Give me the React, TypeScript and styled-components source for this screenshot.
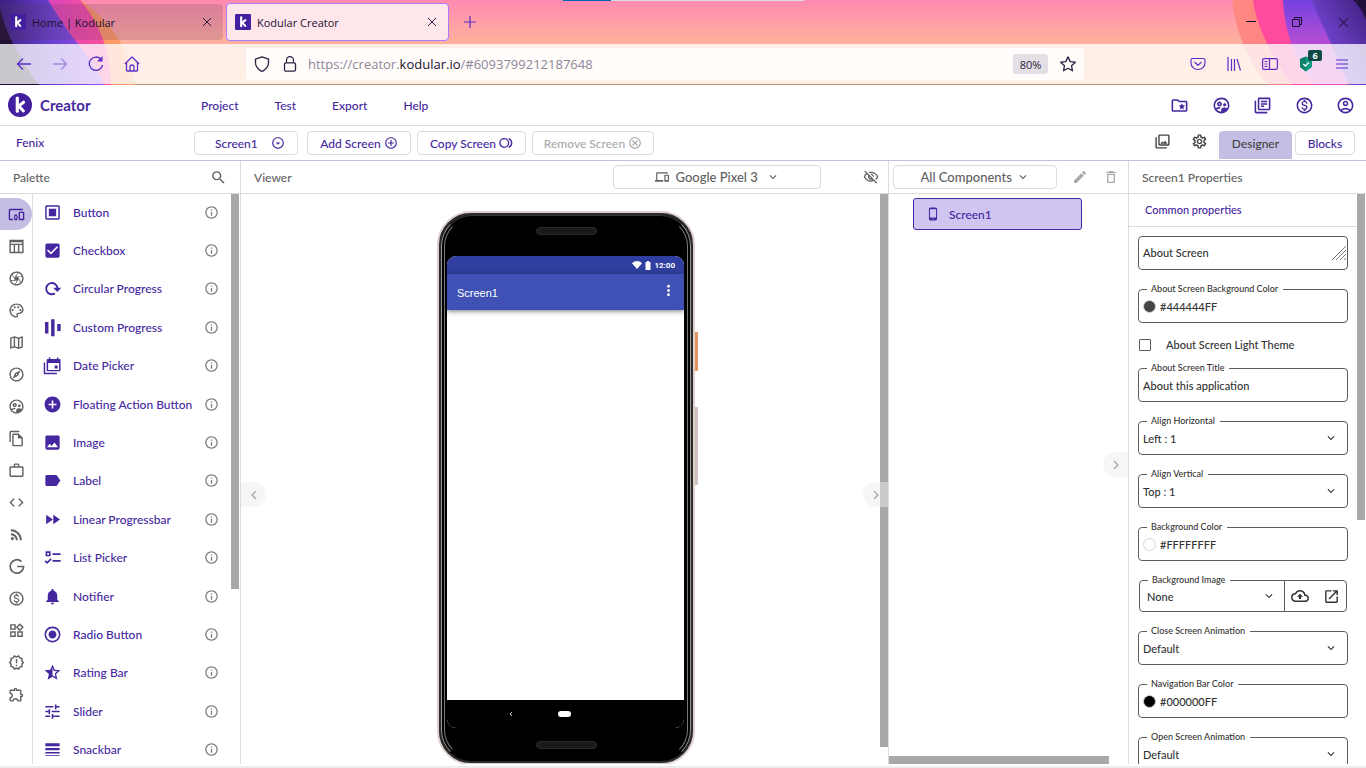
import React from 'react';
import styled, { createGlobalStyle } from 'styled-components';
import type { IconType } from 'react-icons';
import {
  MdAddCircle,
  MdCheckBox,
  MdCode,
  MdDeleteOutline,
  MdEdit,
  MdFastForward,
  MdImage,
  MdInfoOutline,
  MdKeyboardArrowDown,
  MdChevronLeft,
  MdChevronRight,
  MdLabel,
  MdLineWeight,
  MdMoreVert,
  MdNotifications,
  MdOpenInNew,
  MdOutlineAccountCircle,
  MdOutlineAddCircleOutline,
  MdOutlineArrowDropDownCircle,
  MdOutlineBackup,
  MdOutlineCamera,
  MdOutlineCancel,
  MdOutlineDevices,
  MdOutlineDevicesOther,
  MdOutlineExplore,
  MdOutlineExtension,
  MdOutlineFileCopy,
  MdOutlineFolderSpecial,
  MdOutlineLibraryBooks,
  MdOutlineMap,
  MdOutlineMonetizationOn,
  MdOutlineNewReleases,
  MdOutlinePalette,
  MdOutlinePhotoLibrary,
  MdOutlineSettings,
  MdOutlineSupervisedUserCircle,
  MdOutlineVisibilityOff,
  MdOutlineWidgets,
  MdPhoneAndroid,
  MdRadioButtonChecked,
  MdRssFeed,
  MdSearch,
  MdStarHalf,
  MdTune,
  MdWorkOutline,
} from 'react-icons/md';

const purple = '#4527a0';
const lilac = '#c5bee4';
const line = '#dcdcdc';
const grey = '#616161';
const ink = '#333333';
const appFont = "Lato, 'Open Sans', sans-serif";
const chromeFont = "'Open Sans', 'Noto Sans', sans-serif";

const GlobalStyle = createGlobalStyle`
  * { box-sizing: border-box; }
  body { margin: 0; background: #fff; font-family: ${appFont}; font-weight: 500; }
  button, input, select, textarea { font: inherit; color: inherit; }
  button { border: 0; background: none; padding: 0; cursor: pointer; }
  h1, h2, ul { margin: 0; padding: 0; font: inherit; }
  ul { list-style: none; }
  svg { display: block; flex: none; }
`;

const Window = styled.div`
  display: flex;
  flex-direction: column;
  height: 100vh;
  overflow: hidden;
`;

/* ---------- Browser chrome ---------- */

const Chrome = styled.div`
  position: relative;
  background: linear-gradient(#ff8ab1 0, #ffb29c 44px, #ffbd92 84px);
  border-bottom: 1px solid #b98d7e;
  font-family: ${chromeFont};
  font-weight: 400;
`;

const Swirl = styled.svg<{ $side: 'left' | 'right' }>`
  position: absolute;
  top: 0;
  ${(p) => p.$side}: 0;
  width: 150px;
  height: 85px;
`;

const TopMarker = styled.div`
  position: absolute;
  top: 0;
  left: 563px;
  width: 241px;
  height: 1px;
  background: linear-gradient(90deg, #0063b1 48px, #dcdcdc 48px);
`;

const TabStrip = styled.div`
  position: relative;
  display: flex;
  align-items: center;
  height: 44px;
  gap: 3px;
`;

const Tab = styled.div<{ $active?: boolean }>`
  display: flex;
  align-items: center;
  gap: 6px;
  width: 223px;
  height: ${(p) => (p.$active ? 38 : 36)}px;
  padding: 0 11px 0 ${(p) => (p.$active ? 8 : 10)}px;
  border: ${(p) => (p.$active ? '1px solid #a77bff' : '0')};
  border-radius: 4px;
  background: ${(p) => (p.$active ? '#fee6eb' : 'rgba(90, 60, 90, .2)')};
  color: #1c1030;
  font-size: 11px;
`;

const TabTitle = styled.button`
  flex: 1;
  text-align: left;
`;

const TabAdd = styled.button`
  margin-left: 12px;
`;

const WindowControls = styled.div`
  display: flex;
  margin-left: auto;
`;

const WindowButton = styled.button`
  display: grid;
  place-items: center;
  width: 46px;
  height: 44px;
`;

const NavBar = styled.div`
  position: relative;
  display: flex;
  align-items: center;
  height: 40px;
  padding: 0 6px;
  background: rgba(255, 255, 255, .77);
`;

const NavButton = styled.button<{ $faded?: boolean }>`
  position: relative;
  display: grid;
  place-items: center;
  width: 36px;
  height: 32px;
  color: #5b2fc9;
  opacity: ${(p) => (p.$faded ? 0.45 : 1)};
`;

const CountBadge = styled.span`
  position: absolute;
  top: 2px;
  right: 2px;
  width: 14px;
  height: 11px;
  border-radius: 2px;
  background: #0e4a43;
  color: #fff;
  font-size: 9px;
  font-weight: 700;
  line-height: 11px;
  text-align: center;
`;

const UrlBar = styled.div`
  display: flex;
  align-items: center;
  flex: 1;
  height: 32px;
  margin: 0 96px;
  padding: 0 7px;
  border-radius: 4px;
  background: rgba(255, 255, 255, .8);
  color: #2b2140;
`;

const UrlText = styled.div`
  flex: 1;
  margin-left: 9px;
  color: #8c8798;
  font-size: 13px;
  b { color: #1c1030; font-weight: 400; }
`;

const ZoomBadge = styled.button`
  width: 35px;
  height: 20px;
  margin-right: 11px;
  border-radius: 3px;
  background: #e3dfe4;
  font-size: 11px;
`;

const UrlIcon = styled.button`
  display: grid;
  place-items: center;
  width: 18px;
  & + & { margin-left: 10px; }
`;

/* ---------- App header ---------- */

const AppHeader = styled.header`
  display: flex;
  align-items: center;
  height: 41px;
  padding: 0 11px 0 8px;
  border-bottom: 1px solid ${line};
  color: ${purple};
`;

const Brand = styled.h1`
  display: flex;
  align-items: center;
  gap: 8px;
  width: 193px;
  font-size: 15px;
  font-weight: 700;
`;

const Menu = styled.nav`
  display: flex;
  gap: 36px;
  font-size: 12px;
`;

const HeaderIcons = styled.div`
  display: flex;
  justify-content: space-between;
  width: 185px;
  margin-left: auto;
`;

const Toolbar = styled.div`
  display: flex;
  align-items: flex-start;
  gap: 6px;
  height: 35px;
  padding: 5px 11px 0 16px;
  border-bottom: 1px solid ${lilac};
  color: ${purple};
  font-size: 12px;
`;

const ProjectName = styled.div`
  width: 172px;
  line-height: 24px;
`;

const ToolButton = styled.button<{ $width: number; $muted?: boolean }>`
  display: flex;
  align-items: center;
  justify-content: center;
  gap: 3px;
  width: ${(p) => p.$width}px;
  height: 24px;
  border: 1px solid ${line};
  border-radius: 4px;
  color: ${(p) => (p.$muted ? '#a9a9a9' : purple)};
`;

const PickerBox = styled.div<{ $width: number; $gap: number }>`
  display: flex;
  align-items: center;
  justify-content: center;
  gap: ${(p) => p.$gap}px;
  width: ${(p) => p.$width}px;
  height: 24px;
  border: 1px solid ${line};
  border-radius: 4px;
`;

const ScreenPicker = styled(PickerBox)`
  padding-left: 8px;
  margin-right: 3px;
`;

const PlainSelect = styled.select`
  appearance: none;
  border: 0;
  background: none;
  padding: 0;
  outline: 0;
`;

const ToolIcons = styled.div`
  display: flex;
  gap: 20px;
  margin: 2px 5px 0 auto;
  color: #424242;
`;

const ViewTab = styled.button`
  width: 73px;
  height: 28px;
  margin-right: -3px;
  padding-bottom: 4px;
  border-radius: 4px 4px 0 0;
  background: ${lilac};
  color: #424242;
`;

/* ---------- Workspace ---------- */

const Workspace = styled.main`
  display: flex;
  flex: 1;
  min-height: 0;
  margin-bottom: 2px;
`;

const BottomEdge = styled.div`
  height: 2px;
  background: #ececec;
`;

const Panel = styled.section<{ $width?: number }>`
  position: relative;
  display: flex;
  flex-direction: column;
  flex: ${(p) => (p.$width ? `0 0 ${p.$width}px` : '1')};
  min-width: 0;
  & + & { border-left: 1px solid ${line}; }
`;

const PanelHead = styled.div`
  display: flex;
  align-items: center;
  flex: none;
  height: 33px;
  padding: 0 9px 0 13px;
  border-bottom: 1px solid ${line};
  color: ${grey};
  font-size: 12px;
`;

const HeadIcon = styled.button<{ $pale?: boolean }>`
  margin-left: auto;
  color: ${(p) => (p.$pale ? '#a9a9a9' : grey)};
`;

const PaletteHead = styled(PanelHead)`
  padding-right: 13px;
`;

const PanelBody = styled.div`
  display: flex;
  flex: 1;
  min-height: 0;
  overflow: hidden;
`;

const ScrollTrack = styled.div<{ $width: number }>`
  flex: 0 0 ${(p) => p.$width}px;
`;

const ScrollThumb = styled.div<{ $height: number }>`
  width: 8px;
  height: ${(p) => p.$height}px;
  background: #a8a8a8;
`;

const Rail = styled.nav`
  flex: 0 0 33px;
  padding-top: 4px;
  border-right: 1px solid ${line};
`;

const RailButton = styled.button<{ $active?: boolean }>`
  display: grid;
  place-items: center;
  width: 32px;
  height: 32px;
  border-radius: 0 16px 16px 0;
  background: ${(p) => (p.$active ? lilac : 'none')};
  color: ${(p) => (p.$active ? purple : grey)};
`;

const PaletteList = styled.ul`
  display: grid;
  grid-template-rows: repeat(15, 1fr);
  flex: 1;
  height: 576px;
`;

const PaletteItem = styled.li`
  display: flex;
  align-items: center;
  padding: 0 12px 2px 10px;
  color: ${purple};
  font-size: 12px;
  svg:last-child { color: #7b7b7b; }
`;

const PaletteName = styled.button`
  flex: 1;
  margin-left: 11px;
  text-align: left;
  white-space: nowrap;
`;

const Collapse = styled.button<{ $side: 'left' | 'right'; $top: number }>`
  position: absolute;
  top: ${(p) => p.$top}px;
  ${(p) => p.$side}: 0;
  display: grid;
  place-items: center;
  width: 25px;
  height: 25px;
  border-radius: ${(p) => (p.$side === 'left' ? '0 13px 13px 0' : '13px 0 0 13px')};
  background: rgba(238, 238, 238, .5);
  color: #b0b0b0;
`;

const DevicePicker = styled(PickerBox)`
  margin-left: auto;
  margin-right: 42px;
  font-size: 13px;
`;

const FilterPicker = styled(PickerBox)`
  font-size: 13px;
`;

/* ---------- Phone ---------- */

const Stage = styled.div`
  display: flex;
  flex: 1;
  justify-content: center;
  padding: 17px 0 0 11px;
`;

const Phone = styled.div`
  position: relative;
  display: flex;
  flex-direction: column;
  width: 258px;
  height: 554px;
  padding: 43px 9px 35px 8px;
  border: 2px solid #ddd0cd;
  border-radius: 34px;
  background: #000;
  box-shadow: inset 0 0 0 2px #2b2b2b;
  &::before, &::after {
    content: '';
    position: absolute;
    border: 1px solid transparent;
    pointer-events: none;
  }
  &::before {
    inset: 2px;
    border-left-color: #999;
    border-right-color: #999;
    border-top-color: #333;
    border-radius: 31px;
  }
  &::after {
    inset: 5px;
    border-left-color: #777;
    border-right-color: #777;
    border-radius: 28px;
  }
`;

const Speaker = styled.div<{ $edge: 'top' | 'bottom' }>`
  position: absolute;
  ${(p) => p.$edge}: 14px;
  left: 97px;
  width: 61px;
  height: 8px;
  border: 1px solid #2a2a2a;
  border-radius: 4px;
  background: #1a1a1a;
`;

const SideKey = styled.div<{ $top: number; $height: number; $color: string }>`
  position: absolute;
  top: ${(p) => p.$top}px;
  right: -5px;
  width: 3px;
  height: ${(p) => p.$height}px;
  border-radius: 0 1px 1px 0;
  background: ${(p) => p.$color};
`;

const PhoneScreen = styled.div`
  display: flex;
  flex-direction: column;
  flex: 1;
  overflow: hidden;
  border-radius: 9px;
  background: #fff;
`;

const StatusBar = styled.div`
  display: flex;
  align-items: center;
  justify-content: flex-end;
  gap: 3px;
  height: 18px;
  padding: 0 9px;
  background: #303f9f;
  color: #fff;
  font: 700 8px Roboto, sans-serif;
`;

const TitleBar = styled.div`
  display: flex;
  align-items: center;
  justify-content: space-between;
  height: 36px;
  padding: 2px 7px 0 10px;
  background: #3f51b5;
  box-shadow: 0 1px 5px rgba(0, 0, 0, .55);
  color: #fff;
  font: 11px 'Liberation Sans', sans-serif;
  svg { align-self: flex-start; margin-top: 6px; }
`;

const SoftKeys = styled.div`
  display: flex;
  align-items: center;
  gap: 43px;
  height: 28px;
  margin-top: auto;
  padding-left: 60px;
  background: #000;
  color: #fff;
`;

const HomePill = styled.span`
  width: 13px;
  height: 6px;
  border-radius: 3px;
  background: #fff;
`;

/* ---------- Components ---------- */

const ComponentHead = styled(PanelHead)`
  padding: 0 9px 0 4px;
`;

const Tree = styled.div`
  display: flex;
  flex-direction: column;
  flex: 1;
  padding: 4px 46px 0 24px;
`;

const TreeNode = styled.button`
  display: flex;
  align-items: center;
  gap: 9px;
  height: 32px;
  padding-left: 12px;
  border: 1px solid ${purple};
  border-radius: 3px;
  background: #d0c4f0;
  color: ${purple};
  font-size: 12px;
`;

const HorizontalThumb = styled.div`
  width: 220px;
  height: 8px;
  background: #a8a8a8;
`;

/* ---------- Properties ---------- */

const Properties = styled.div`
  flex: 1;
  min-width: 0;
  color: ${ink};
  font-size: 11px;
`;

const GroupTitle = styled.h2`
  height: 33px;
  padding-left: 16px;
  border-bottom: 1px solid ${line};
  color: ${purple};
  font-size: 11px;
  line-height: 32px;
`;

const Form = styled.form`
  padding: 9px 9px 0;
`;

const FieldBox = styled.div<{ $split?: boolean }>`
  position: relative;
  display: flex;
  align-items: center;
  height: ${(p) => (p.$split ? 32 : 34)}px;
  margin: ${(p) => (p.$split ? '0 1px 19px' : '0 0 19px')};
  padding-left: ${(p) => (p.$split ? 7 : 4)}px;
  border: 1px solid #5c5c5c;
  border-radius: 4px;
`;

const FieldLabel = styled.label`
  position: absolute;
  top: -8px;
  left: 8px;
  padding: 0 5px 0 4px;
  background: #fff;
  font-size: 9px;
  line-height: 14px;
`;

const FieldInput = styled.input`
  flex: 1;
  min-width: 0;
  padding: 0;
  border: 0;
  outline: 0;
  background: none;
`;

const FieldArea = styled.textarea`
  flex: 1;
  min-width: 0;
  height: 16px;
  padding: 0;
  border: 0;
  outline: 0;
  background: none;
  line-height: 16px;
  resize: none;
  overflow: hidden;
`;

const FieldSelect = styled(PlainSelect)`
  flex: 1;
  min-width: 0;
  margin-right: -16px;
`;

const Chevron = styled(MdKeyboardArrowDown)<{ $inset: number }>`
  margin-right: ${(p) => p.$inset}px;
  pointer-events: none;
`;

const Swatch = styled.span<{ $color: string }>`
  width: 13px;
  height: 13px;
  margin-right: 4px;
  border: 1px solid #d6d6d6;
  border-radius: 50%;
  background: ${(p) => p.$color};
`;

const CheckRow = styled.label`
  display: flex;
  align-items: center;
  gap: 15px;
  height: 45px;
  margin-top: -19px;
  padding: 0 0 2px 1px;
`;

const CheckInput = styled.input`
  appearance: none;
  width: 12px;
  height: 12px;
  margin: 0;
  border: 1px solid #5c5c5c;
  border-radius: 1px;
`;

const SplitActions = styled.div`
  display: flex;
  align-items: center;
  gap: 14px;
  height: 32px;
  padding: 0 6px;
  border-left: 1px solid #5c5c5c;
`;

/* ---------- Drawn icons ---------- */

const Mark = ({ size, round }: { size: number; round?: boolean }) => (
  <svg width={size} height={size} viewBox="0 0 24 24" fill="none" aria-hidden="true">
    <rect width="24" height="24" rx={round ? 12 : 2} fill="#4320a0" />
    <path d="M9.3 5v13.2" stroke="#fff" strokeWidth="3.2" strokeLinecap="round" />
    <path d="M15.6 9.2l-4.8 3.7 4.6 5" stroke="#fff" strokeWidth="3" strokeLinecap="round" strokeLinejoin="round" />
  </svg>
);

const Cross = ({ size = 10 }: { size?: number }) => (
  <svg width={size} height={size} viewBox="0 0 10 10" stroke="#2b1a45" fill="none">
    <path d="M1 1l8 8M9 1l-8 8" />
  </svg>
);

type DrawnProps = { size?: number };

const ButtonIcon = ({ size = 18 }: DrawnProps) => (
  <svg width={size} height={size} viewBox="-1 -1 26 26" fill="currentColor">
    <path d="M4 2h16a2 2 0 0 1 2 2v16a2 2 0 0 1-2 2H4a2 2 0 0 1-2-2V4c0-1.100.9-2 2-2zm0 2v16h16V4zM7 7h10v10H7z" fillRule="evenodd" />
  </svg>
);

const CircularIcon = ({ size = 18 }: DrawnProps) => (
  <svg width={size} height={size} viewBox="-2 -2 28 28" fill="none" stroke="currentColor" strokeWidth="2.8">
    <path d="M15.500 19.200A8.300 8.300 0 1 1 19.300 12" />
    <path d="M13 11h12l-6 6z" fill="currentColor" stroke="none" />
  </svg>
);

const BarsIcon = ({ size = 18 }: DrawnProps) => (
  <svg width={size} height={size} viewBox="-2 -2 28 28" fill="currentColor">
    <path d="M1 4h5v17H1zM10 0h5v25h-5zM19 7h5v10h-5z" />
  </svg>
);

const DateIcon = ({ size = 18 }: DrawnProps) => (
  <svg width={size} height={size} viewBox="-1 -1 26 26" fill="currentColor">
    <path d="M7 1h2v2h9V1h2v2h1.500A1.500 1.500 0 0 1 23 4.500v14a1.500 1.500 0 0 1-1.500 1.500h-16A1.500 1.500 0 0 1 4 18.500v-14A1.500 1.500 0 0 1 5.500 3H7zM6 8.500V18h15V8.500zM15 12h4v4h-4z" fillRule="evenodd" />
    <path d="M0 8h2v14h16v2H1.500A1.500 1.500 0 0 1 0 22.500z" />
  </svg>
);

const ListIcon = ({ size = 18 }: DrawnProps) => (
  <svg width={size} height={size} viewBox="-2 -2 28 28" fill="none" stroke="currentColor" strokeWidth="2.4">
    <path d="M3 4h5v5H3zM12 7h12M12 17h12M1 17l3 3 6-6" />
  </svg>
);

const GIcon = ({ size = 16 }: DrawnProps) => (
  <svg width={size} height={size} viewBox="0 0 24 24" fill="none" stroke="currentColor" strokeWidth="2.400">
    <path d="M19 5a9.500 9.500 0 1 0 3 7h-9" />
  </svg>
);

const TableIcon = ({ size = 16 }: DrawnProps) => (
  <svg width={size} height={size} viewBox="0 0 24 24" fill="none" stroke="currentColor" strokeWidth="2">
    <path d="M3 3.500h18v17H3zM3 9h18M9 9v11.500M15 9v11.500M3 5h18" />
  </svg>
);

const CopyRings = () => (
  <svg width="14" height="14" viewBox="0 0 24 24" fill="none" stroke="currentColor" strokeWidth="2.400">
    <circle cx="9" cy="12" r="7.500" />
    <path d="M16.500 4.500a8 8 0 0 1 0 15" />
  </svg>
);

const paletteItems: [string, IconType | React.FC<DrawnProps>][] = [
  ['Button', ButtonIcon],
  ['Checkbox', MdCheckBox],
  ['Circular Progress', CircularIcon],
  ['Custom Progress', BarsIcon],
  ['Date Picker', DateIcon],
  ['Floating Action Button', MdAddCircle],
  ['Image', MdImage],
  ['Label', MdLabel],
  ['Linear Progressbar', MdFastForward],
  ['List Picker', ListIcon],
  ['Notifier', MdNotifications],
  ['Radio Button', MdRadioButtonChecked],
  ['Rating Bar', MdStarHalf],
  ['Slider', MdTune],
  ['Snackbar', MdLineWeight],
];

const railItems: [string, IconType | React.FC<DrawnProps>][] = [
  ['User Interface', MdOutlineDevicesOther],
  ['Layout', TableIcon],
  ['Media', MdOutlineCamera],
  ['Drawing and Animation', MdOutlinePalette],
  ['Maps', MdOutlineMap],
  ['Sensors', MdOutlineExplore],
  ['Social', MdOutlineSupervisedUserCircle],
  ['Storage', MdOutlineFileCopy],
  ['Utilities', MdWorkOutline],
  ['Dynamic Components', MdCode],
  ['Connectivity', MdRssFeed],
  ['Google', GIcon],
  ['Monetization', MdOutlineMonetizationOn],
  ['Widgets', MdOutlineWidgets],
  ['Experimental', MdOutlineNewReleases],
  ['Extension', MdOutlineExtension],
];

const headerIcons: [string, IconType][] = [
  ['Projects', MdOutlineFolderSpecial],
  ['Community', MdOutlineSupervisedUserCircle],
  ['Docs', MdOutlineLibraryBooks],
  ['Earnings', MdOutlineMonetizationOn],
  ['Account', MdOutlineAccountCircle],
];

const SelectField = ({ id, label, value }: { id: string; label: string; value: string }) => (
  <FieldBox>
    <FieldLabel htmlFor={id}>{label}</FieldLabel>
    <FieldSelect id={id}>
      <option>{value}</option>
    </FieldSelect>
    <Chevron size={14} $inset={9} />
  </FieldBox>
);

const TextField = ({ id, label, value, swatch }: { id: string; label: string; value: string; swatch?: string }) => (
  <FieldBox>
    <FieldLabel htmlFor={id}>{label}</FieldLabel>
    {swatch && <Swatch $color={swatch} />}
    <FieldInput id={id} defaultValue={value} />
  </FieldBox>
);

const BrowserChrome = () => (
  <Chrome>
    <Swirl $side="left" viewBox="0 0 150 85" aria-hidden="true">
      <defs>
        <linearGradient id="violet" x1="0" x2="1">
          <stop offset="0" stopColor="#3a1f80" />
          <stop offset=".5" stopColor="#6a3fd0" />
          <stop offset="1" stopColor="#9a50f0" />
        </linearGradient>
        <linearGradient id="rose" x1="0" x2="1">
          <stop offset="0" stopColor="#c43fd0" />
          <stop offset="1" stopColor="#ff4f9c" />
        </linearGradient>
        <linearGradient id="peach" x1="0" x2="1">
          <stop offset="0" stopColor="#ff7a80" />
          <stop offset="1" stopColor="#ffa060" />
        </linearGradient>
      </defs>
      <path d="M0 0h80c30 20 50 50 55 85H0z" fill="url(#peach)" />
      <path d="M0 0h80c20 24 30 50 31 85H0z" fill="url(#rose)" />
      <path d="M0 0h48c10 16 20 32 30 44s20 26 26 41H0z" fill="url(#violet)" />
      <path d="M0 8c4 20 18 50 39 77H0z" fill="#1e0f33" />
    </Swirl>
    <Swirl $side="right" viewBox="0 0 150 85" aria-hidden="true">
      <defs>
        <linearGradient id="coral" x1="0" x2="1">
          <stop offset="0" stopColor="#ff8a80" />
          <stop offset="1" stopColor="#ff6f90" />
        </linearGradient>
        <linearGradient id="violetDown" x1="0" y1="0" x2="0" y2="1">
          <stop offset="0" stopColor="#7442e0" />
          <stop offset=".6" stopColor="#c04fd0" />
          <stop offset="1" stopColor="#e050c0" />
        </linearGradient>
        <linearGradient id="indigo" x1="0" y1="1" x2="1" y2="0">
          <stop offset="0" stopColor="#9058ff" />
          <stop offset="1" stopColor="#40207f" />
        </linearGradient>
      </defs>
      <path d="M16 0c3 30 16 62 36 85h98V0z" fill="url(#coral)" />
      <path d="M37 0c3 25 20 60 40 85h73V0z" fill="#ff4a9e" />
      <path d="M67 0c1 30 12 60 30 85h53V0z" fill="url(#violetDown)" />
      <path d="M96 0c8 24 24 50 36 85h18V0z" fill="url(#indigo)" />
      <path d="M137 0c6 5 10 12 13 20V0z" fill="#22103c" />
    </Swirl>
    <TopMarker />
    <TabStrip>
      <Tab>
        <Mark size={16} />
        <TabTitle>Home | Kodular</TabTitle>
        <button aria-label="Close tab"><Cross /></button>
      </Tab>
      <Tab $active>
        <Mark size={16} />
        <TabTitle>Kodular Creator</TabTitle>
        <button aria-label="Close tab"><Cross /></button>
      </Tab>
      <TabAdd aria-label="New tab">
        <svg width="12" height="12" viewBox="0 0 12 12" stroke="#5b2fc9" strokeWidth="1.200">
          <path d="M6 0v12M0 6h12" />
        </svg>
      </TabAdd>
      <WindowControls>
        <WindowButton aria-label="Minimize">
          <svg width="10" height="10" stroke="#1c1030"><path d="M0 4.500h10" /></svg>
        </WindowButton>
        <WindowButton aria-label="Restore">
          <svg width="11" height="11" stroke="#1c1030" fill="none">
            <path d="M.5 2.500h7v7h-7zM2.500 2.500v-2h7v7h-2" />
          </svg>
        </WindowButton>
        <WindowButton aria-label="Close window"><Cross size={11} /></WindowButton>
      </WindowControls>
    </TabStrip>
    <NavBar>
      <NavButton aria-label="Back">
        <svg width="16" height="16" fill="none" stroke="currentColor" strokeWidth="1.300">
          <path d="M15 8H1.500M7 2.500L1.500 8 7 13.500" />
        </svg>
      </NavButton>
      <NavButton aria-label="Forward" $faded>
        <svg width="16" height="16" fill="none" stroke="currentColor" strokeWidth="1.300">
          <path d="M1 8h13.500M9 2.500L14.500 8 9 13.500" />
        </svg>
      </NavButton>
      <NavButton aria-label="Reload">
        <svg width="16" height="16" fill="none" stroke="currentColor" strokeWidth="1.300">
          <path d="M12.800 3A6.700 6.700 0 1 0 14.600 9" />
          <path d="M14.500 0v5.500H9z" fill="currentColor" stroke="none" />
        </svg>
      </NavButton>
      <NavButton aria-label="Home">
        <svg width="16" height="16" fill="none" stroke="currentColor" strokeWidth="1.300" strokeLinejoin="round">
          <path d="M.8 8L8 1l7.200 7M2.500 6.800V14a1 1 0 0 0 1 1h9a1 1 0 0 0 1-1V6.800M6 15v-4a2 2 0 0 1 4 0v4" />
        </svg>
      </NavButton>
      <UrlBar>
        <UrlIcon aria-label="Tracking protection">
          <svg width="16" height="16" fill="none" stroke="currentColor" strokeWidth="1.300" strokeLinejoin="round">
            <path d="M8 .8l6.500 2.400v3.600c0 3.800-2.700 6.400-5.300 8.100-.8.500-1.600.5-2.400 0C4.200 13.200 1.500 10.600 1.500 6.800V3.200z" />
          </svg>
        </UrlIcon>
        <UrlIcon aria-label="Connection secure">
          <svg width="16" height="16" fill="none" stroke="currentColor" strokeWidth="1.300">
            <rect x="2.500" y="6.800" width="11" height="8.400" rx="1.500" />
            <path d="M4.500 6.500V4.200a3.500 3.500 0 0 1 7 0v2.300" />
          </svg>
        </UrlIcon>
        <UrlText role="textbox" aria-label="Address">
          https://creator.<b>kodular.io</b>/#6093799212187648
        </UrlText>
        <ZoomBadge>80%</ZoomBadge>
        <UrlIcon aria-label="Bookmark">
          <svg width="16" height="16" viewBox="0 0 16 16" fill="none" stroke="currentColor" strokeWidth="1.300" strokeLinejoin="round">
            <path d="M8 .9l2.200 4.700 5.100.6-3.800 3.500 1 5.100L8 12.300l-4.500 2.500 1-5.100L.7 6.200l5.100-.6z" />
          </svg>
        </UrlIcon>
      </UrlBar>
      <NavButton aria-label="Pocket">
        <svg width="16" height="16" fill="none" stroke="currentColor" strokeWidth="1.200" strokeLinejoin="round">
          <path d="M2.500 2.500h11a1.500 1.500 0 0 1 1.500 1.500v3a7 6.500 0 0 1-14 0V4a1.500 1.500 0 0 1 1.500-1.500zM4.500 6L8 9.300 11.500 6" />
        </svg>
      </NavButton>
      <NavButton aria-label="Library">
        <svg width="16" height="16" fill="none" stroke="currentColor" strokeWidth="1.200">
          <path d="M2 1v14M5.500 3v12M8.500 3v12M11 3l3.500 11.500" />
        </svg>
      </NavButton>
      <NavButton aria-label="Sidebar">
        <svg width="16" height="14" fill="none" stroke="currentColor" strokeWidth="1.200">
          <rect x=".6" y="1.600" width="14.800" height="10.800" rx="1.500" />
          <path d="M7.500 1.500v11M2.500 4.500h3M2.500 7h3M2.500 9.500h3" />
        </svg>
      </NavButton>
      <NavButton aria-label="Shield extension">
        <svg width="16" height="16" fill="none">
          <path d="M8 .5l6 2.500v8l-6 4.500L2 11V3z" fill="#129a80" />
          <path d="M8 .5L2 3v8l6 4.500z" fill="#0c8069" />
          <path d="M5.300 8l2 2 3.500-3.500" stroke="#fff" strokeWidth="1.300" />
        </svg>
        <CountBadge>6</CountBadge>
      </NavButton>
      <NavButton aria-label="Menu">
        <svg width="12" height="10" stroke="currentColor" strokeWidth="1.200">
          <path d="M0 1h12M0 5h12M0 9h12" />
        </svg>
      </NavButton>
    </NavBar>
  </Chrome>
);

const PhonePreview = () => (
  <Phone>
    <Speaker $edge="top" />
    <PhoneScreen>
      <StatusBar>
        <svg width="10" height="8" viewBox="0 0 10 8" fill="#fff"><path d="M0 2.200C3 -.6 7 -.6 10 2.200L5 8z" /></svg>
        <svg width="6" height="9" viewBox="0 0 6 9" fill="#fff"><path d="M.5 1h1.500V0h2v1h1.500v8h-5z" /></svg>
        <span>12:00</span>
      </StatusBar>
      <TitleBar>
        <span>Screen1</span>
        <MdMoreVert size={17} />
      </TitleBar>
      <SoftKeys>
        <MdChevronLeft size={8} />
        <HomePill />
      </SoftKeys>
    </PhoneScreen>
    <Speaker $edge="bottom" />
    <SideKey $top={119} $height={39} $color="#e8935f" />
    <SideKey $top={194} $height={78} $color="#cfc2c0" />
  </Phone>
);

export default function App() {
  return (
    <Window>
      <GlobalStyle />
      <BrowserChrome />

      <AppHeader>
        <Brand>
          <Mark size={24} round />
          Creator
        </Brand>
        <Menu>
          {['Project', 'Test', 'Export', 'Help'].map((name) => (
            <button key={name}>{name}</button>
          ))}
        </Menu>
        <HeaderIcons>
          {headerIcons.map(([name, Icon]) => (
            <button key={name} aria-label={name}><Icon size={19} /></button>
          ))}
        </HeaderIcons>
      </AppHeader>

      <Toolbar>
        <ProjectName>Fenix</ProjectName>
        <ScreenPicker $width={104} $gap={13}>
          <PlainSelect aria-label="Screen"><option>Screen1</option></PlainSelect>
          <MdOutlineArrowDropDownCircle size={14} />
        </ScreenPicker>
        <ToolButton $width={104}>Add Screen<MdOutlineAddCircleOutline size={14} /></ToolButton>
        <ToolButton $width={109}>Copy Screen<CopyRings /></ToolButton>
        <ToolButton $width={122} $muted>Remove Screen<MdOutlineCancel size={14} /></ToolButton>
        <ToolIcons>
          <button aria-label="Assets"><MdOutlinePhotoLibrary size={17} /></button>
          <button aria-label="Project settings"><MdOutlineSettings size={17} /></button>
        </ToolIcons>
        <ViewTab>Designer</ViewTab>
        <ToolButton $width={60}>Blocks</ToolButton>
      </Toolbar>

      <Workspace>
        <Panel $width={240}>
          <PaletteHead>
            Palette
            <HeadIcon aria-label="Search palette"><MdSearch size={17} /></HeadIcon>
          </PaletteHead>
          <PanelBody>
            <Rail>
              {railItems.map(([name, Icon], index) => (
                <RailButton key={name} aria-label={name} $active={index === 0}>
                  <Icon size={17} />
                </RailButton>
              ))}
            </Rail>
            <PaletteList>
              {paletteItems.map(([name, Icon]) => (
                <PaletteItem key={name}>
                  <Icon size={19} />
                  <PaletteName>{name}</PaletteName>
                  <MdInfoOutline size={15} />
                </PaletteItem>
              ))}
            </PaletteList>
            <ScrollTrack $width={9}><ScrollThumb $height={395} /></ScrollTrack>
          </PanelBody>
        </Panel>

        <Panel>
          <PanelHead>
            Viewer
            <DevicePicker $width={208} $gap={7}>
              <MdOutlineDevices size={14} />
              <PlainSelect aria-label="Device"><option>Google Pixel 3</option></PlainSelect>
              <Chevron size={14} $inset={0} />
            </DevicePicker>
            <button aria-label="Hidden components"><MdOutlineVisibilityOff size={16} /></button>
          </PanelHead>
          <PanelBody>
            <Stage><PhonePreview /></Stage>
            <ScrollTrack $width={8}><ScrollThumb $height={553} /></ScrollTrack>
          </PanelBody>
          <Collapse $side="left" $top={321} aria-label="Collapse palette"><MdChevronLeft size={18} /></Collapse>
          <Collapse $side="right" $top={321} aria-label="Collapse components"><MdChevronRight size={18} /></Collapse>
        </Panel>

        <Panel $width={240}>
          <ComponentHead>
            <FilterPicker $width={164} $gap={3}>
              <PlainSelect aria-label="Component filter"><option>All Components</option></PlainSelect>
              <Chevron size={14} $inset={0} />
            </FilterPicker>
            <HeadIcon $pale aria-label="Rename"><MdEdit size={16} /></HeadIcon>
            <HeadIcon $pale aria-label="Delete"><MdDeleteOutline size={16} /></HeadIcon>
          </ComponentHead>
          <PanelBody>
            <Tree>
              <TreeNode><MdPhoneAndroid size={14} />Screen1</TreeNode>
            </Tree>
          </PanelBody>
          <HorizontalThumb />
          <Collapse $side="right" $top={291} aria-label="Collapse properties"><MdChevronRight size={18} /></Collapse>
        </Panel>

        <Panel $width={238}>
          <PanelHead>Screen1 Properties</PanelHead>
          <PanelBody>
            <Properties>
              <GroupTitle>Common properties</GroupTitle>
              <Form>
                <FieldBox>
                  <FieldArea aria-label="About Screen" defaultValue="About Screen" rows={1} />
                  <svg width="16" height="16" stroke="#777" fill="none">
                    <path d="M1 15L15 1M5 15L15 5M9 15l6-6M13 15l2-2" />
                  </svg>
                </FieldBox>
                <TextField id="about-bg" label="About Screen Background Color" value="#444444FF" swatch="#444444" />
                <CheckRow>
                  <CheckInput type="checkbox" />
                  About Screen Light Theme
                </CheckRow>
                <TextField id="about-title" label="About Screen Title" value="About this application" />
                <SelectField id="align-h" label="Align Horizontal" value="Left : 1" />
                <SelectField id="align-v" label="Align Vertical" value="Top : 1" />
                <TextField id="bg-color" label="Background Color" value="#FFFFFFFF" swatch="#ffffff" />
                <FieldBox $split>
                  <FieldLabel htmlFor="bg-image">Background Image</FieldLabel>
                  <FieldSelect id="bg-image"><option>None</option></FieldSelect>
                  <Chevron size={14} $inset={8} />
                  <SplitActions>
                    <button type="button" aria-label="Upload image"><MdOutlineBackup size={18} /></button>
                    <button type="button" aria-label="Open image"><MdOpenInNew size={17} /></button>
                  </SplitActions>
                </FieldBox>
                <SelectField id="close-anim" label="Close Screen Animation" value="Default" />
                <TextField id="nav-color" label="Navigation Bar Color" value="#000000FF" swatch="#000000" />
                <SelectField id="open-anim" label="Open Screen Animation" value="Default" />
              </Form>
            </Properties>
            <ScrollTrack $width={9}><ScrollThumb $height={326} /></ScrollTrack>
          </PanelBody>
        </Panel>
      </Workspace>
      <BottomEdge />
    </Window>
  );
}
